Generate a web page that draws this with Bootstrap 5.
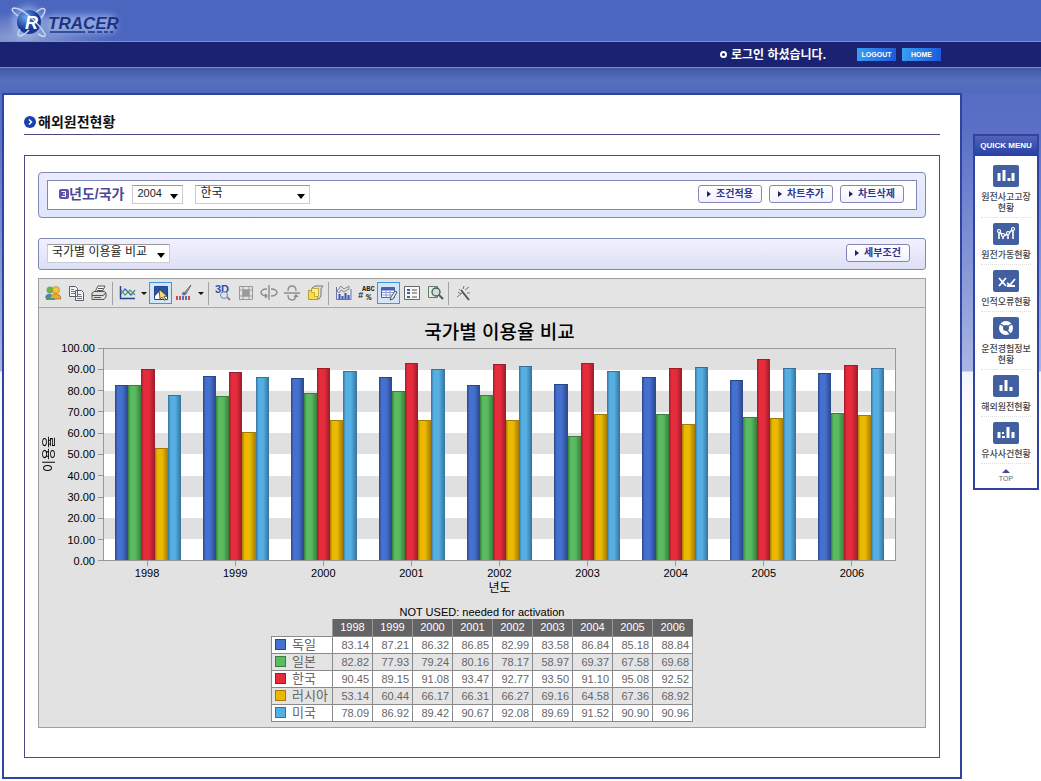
<!DOCTYPE html>
<html lang="ko">
<head>
<meta charset="utf-8">
<meta name="viewport" content="width=device-width, initial-scale=1">
<title>R-TRACER 해외원전현황</title>
<link href="https://cdn.jsdelivr.net/npm/bootstrap@5.3.0/dist/css/bootstrap.min.css" rel="stylesheet">
<style>
:root{--line:#4a4a80;--royal:#2f43a3}
body{font:12px/16px "Liberation Sans","Noto Sans CJK KR",sans-serif;color:#222;background:#fff linear-gradient(#4a64bd 0,#5a70c6 130px,#8394d6 260px,#a9b6e4 371px,#f3f5fd 372px,#fff 430px) no-repeat}
.brandbar{height:42px;border-bottom:1px solid #7f90d0;background:radial-gradient(ellipse 90px 26px at 20px 38px,#8fa0d4,transparent),#4b66be}
.brandbar svg{display:block}
.userbar{height:26px;background:#1a2272;border-bottom:1px solid #7c8ac4;padding-right:100px;color:#fff}
.greeting{margin-right:31px}
.dotmark{width:7px;height:7px;border:2px solid #fff;border-radius:50%}
.pill{width:39px;height:13px;border:0;background:linear-gradient(100deg,#3aa0f4,#1c58dc);color:#fff;font:bold 7px/13px "Liberation Sans",sans-serif;padding:0}
.pill+.pill{margin-left:6px}
.shade{height:25px;background:linear-gradient(#4058a0,#5670bf 50%,#5069bd)}
.stage{padding:0 2px 2px}
.panel{border:2px solid var(--royal);background:#fff;padding:18px 20px 19px}
.headline{font-size:14px;line-height:18px;color:#111;padding-bottom:3px;border-bottom:1px solid var(--line);gap:2px}
.frame{border:1px solid var(--line);margin-top:20px;padding:16px 13px 29px}
.outerbox{border:1px solid #8088b4;border-radius:4px;background:linear-gradient(#ecebff,#dfe5fb);padding:7px 8px}
.innerbox{border:1px solid #7c88b8;background:#fff;height:30px;padding:0 12px 2px 11px}
.slimbox{border:1px solid #8088b4;border-radius:3px;background:linear-gradient(#f2f1ff,#dcdff4);height:32px;margin-top:20px;padding:0 15px 2px 8px}
.cond{font-size:14px;color:#4a4a98}
.pick{height:19px;border:1px solid #c9ccd6;border-top-color:#999;border-radius:0;font-size:12px;line-height:15px;color:#222;padding:0 14px 2px 4px;appearance:none;background:#fff url("data:image/svg+xml,%3Csvg xmlns='http://www.w3.org/2000/svg' width='8' height='5'%3E%3Cpath d='M0 0h8L4 5z'/%3E%3C/svg%3E") no-repeat right 4px bottom 4px}
.pick-year{width:51px;font-size:11px}.pick-nation{width:115px;margin-left:12px}.pick-chart{width:123px}
.gobar{gap:7px}
.go{height:18px;width:64px;border:1px solid #8585b8;border-radius:3px;background:linear-gradient(#fff,#f2f2ff);color:#33338c;font-size:10px;line-height:16px;font-weight:bold;padding:0;white-space:nowrap}
.go::before{content:"";border:3px solid transparent;border-left:4px solid #222266;border-right:0;margin-right:5px;display:inline-block}
.viewer{border:1px solid #a0a0a0;background:#e2e2e2;margin-top:8px;padding-bottom:5px}
.tools{height:29px;border-bottom:1px solid #a8a8a8;background:#e4e4e4;padding-left:2px}
.tool{width:23px;height:22px;border:1px solid transparent;background:none;padding:0;display:flex;align-items:center;justify-content:center}
.tool.on{border-color:#3f95e0;background:#d3e6f8}
.tool svg{width:18px;height:18px}
.drop{width:11px;border:0;background:none;padding:0;display:flex;justify-content:center}
.drop::before{content:"";border:3px solid transparent;border-top:3px solid #111;border-bottom:0}
.bar-sep{width:1px;height:23px;background:#a2a2a2;margin:0 2px}
.charttitle{font-size:19px;line-height:20px;font-weight:500;color:#000;margin:15px 29px 5px 64px;text-align:center}
.plotrow{padding:0 29px 0 4px}
.ytitle{width:12px;font-size:13px;line-height:12px;writing-mode:vertical-rl;text-orientation:sideways;transform:rotate(180deg);text-align:center;color:#000}
.yaxis{width:48px;margin:-7px 0;font-size:11px;line-height:14px;color:#000}
.yaxis span::after{content:"";width:5px;height:1px;background:#999;margin-left:3px}
.plot{height:213px;border:1px solid #999;background:repeating-linear-gradient(#e0e0e0 0 10%,#fff 10% 20%)}
.cluster{padding:0 11px}
.cluster i{flex:1 1 0;background:linear-gradient(90deg,var(--d),var(--c) 20%,var(--c) 55%,var(--d));border-top:1px solid var(--d)}
.s0{--c:#4470d0;--d:#2b4687}.s1{--c:#5abb60;--d:#37803c}.s2{--c:#e62c3c;--d:#9c1c2a}.s3{--c:#ecb900;--d:#a17b05}.s4{--c:#55afe2;--d:#35729b}
.xaxis{margin:0 29px 0 64px;font-size:11px;line-height:15px;color:#000}
.xaxis span::before{content:"";display:block;width:1px;height:5px;margin:0 auto;background:#999}
.xtitle{font-size:12px;line-height:14px;color:#000;margin:0 29px 11px 64px}
.grid{border-collapse:collapse;font-size:11px;line-height:14px;color:#666}
.grid caption{caption-side:top;padding:0;color:#000;line-height:13px;text-align:center}
.grid td,.grid tbody th{border:1px solid #8a8a8a;background:#fff;font-weight:normal}
.grid td,.grid thead th{width:40px;height:17px;padding:0 3px;text-align:right}
.grid thead th{background:#646464;color:#fff;font-weight:normal;text-align:center;border-left:1px solid #999}
.grid thead td{border:0;background:none;width:61px}
.grid tbody th{padding:0 3px;font-size:13px;line-height:14px;white-space:nowrap}
.grid tbody tr:nth-child(even)>*{background:#e4e4e4}
.swatch{display:inline-block;width:11px;height:11px;background:var(--c);border:1px solid var(--d);margin-right:6px}
.quick{width:66px;margin:41px 0 0 11px;border:2px solid #3143a0;background:#fff}
.quick h2{font:bold 8px/20px "Liberation Sans",sans-serif;color:#fff;background:linear-gradient(#5264b8,#2740a4);margin:0 0 4px;text-align:center;white-space:nowrap}
.quick a{display:block;margin:0 6px;padding:5px 0 3px;border-bottom:1px dotted #ddd;text-decoration:none;color:#444;font-size:9px;line-height:11px;text-align:center;font-weight:500}
.quick a svg{display:block;margin:0 auto 5px;width:26px;height:22px}
.quick a span{display:block;margin:0 -4px}
.quick a.totop{border:0;padding:5px 0 5px;font-size:7px;line-height:8px;color:#666}
.quick a.totop svg{width:8px;height:4px;margin-bottom:2px}
</style>
</head>
<body>
<header>
  <div class="brandbar">
    <svg width="130" height="41" viewBox="0 0 130 41" role="img" aria-label="R TRACER">
      <defs><radialGradient id="ball" cx=".35" cy=".3"><stop offset="0" stop-color="#6ea4ea"/><stop offset="1" stop-color="#153a96"/></radialGradient>
      <filter id="halo" x="-20%" y="-50%" width="140%" height="200%"><feGaussianBlur stdDeviation="3"/></filter></defs>
      <rect x="46" y="15" width="70" height="18" rx="6" fill="#9db5e8" opacity=".75" filter="url(#halo)"/>
      <circle cx="28" cy="22" r="16" fill="#a9c0ee" opacity=".6" filter="url(#halo)"/>
      <circle cx="29" cy="22" r="12" fill="url(#ball)"/>
      <g fill="none" stroke="#c6d6f4" stroke-width="1.500"><path d="M18 16Q9 9 14 8q6 0 14 7 12 10 17 19 1 5-7 0"/><path d="M36 12q8-6 9-2 0 3-4 8M20 29q-4 7 0 7 4-1 9-6"/></g>
      <text x="25" y="29" font-family="Liberation Sans" font-size="18" font-style="italic" font-weight="bold" fill="#fff">R</text>
      <text x="48" y="29" font-family="Liberation Sans" font-size="17" font-style="italic" font-weight="bold" fill="#1d3482">TRACER</text>
      <path d="M50 32h35M88 32h7M97 32h5M104 32h4M110 32h3" stroke="#1d3482" stroke-width="1.500"/>
    </svg>
  </div>
  <nav class="userbar d-flex align-items-center justify-content-end">
    <span class="dotmark me-1"></span><strong class="greeting">로그인 하셨습니다.</strong>
    <button class="pill" type="button">LOGOUT</button>
    <button class="pill" type="button">HOME</button>
  </nav>
  <div class="shade"></div>
</header>
<div class="stage d-flex align-items-start">
  <main class="panel flex-grow-1">
    <h1 class="headline d-flex align-items-center fw-bold mb-0">
      <svg width="12" height="12" viewBox="0 0 12 12"><circle cx="6" cy="6" r="6" fill="#1c3fae"/><path d="M5 3.500l2.500 2.500L5 8.500" fill="none" stroke="#fff" stroke-width="1.500"/></svg>
      해외원전현황
    </h1>
    <section class="frame">
      <form class="outerbox">
        <div class="innerbox d-flex align-items-center">
          <svg class="flex-shrink-0" width="10" height="10" viewBox="0 0 10 10"><rect width="10" height="10" rx="2" fill="#5a54ac"/><path d="M2.500 2.500h4v5h-4M4 5h3" fill="none" stroke="#fff"/></svg>
          <label class="cond fw-bold me-2" for="year">년도/국가</label>
          <select class="pick pick-year" id="year"><option>2004</option></select>
          <select class="pick pick-nation" id="nation" aria-label="국가"><option>한국</option></select>
          <div class="gobar d-flex ms-auto">
            <button class="go" type="button">조건적용</button>
            <button class="go" type="button">차트추가</button>
            <button class="go" type="button">차트삭제</button>
          </div>
        </div>
      </form>
      <div class="slimbox d-flex align-items-center">
        <select class="pick pick-chart" aria-label="차트"><option>국가별 이용율 비교</option></select>
        <button class="go ms-auto" type="button">세부조건</button>
      </div>
      <div class="viewer">
        <div class="tools d-flex align-items-center" role="toolbar" aria-label="차트 도구">
          <button class="tool" type="button" aria-label="열기"><svg viewBox="0 0 18 18"><circle cx="6" cy="6" r="3.500" fill="#6cb04c"/><circle cx="12" cy="6" r="3.500" fill="#f3c53e" stroke="#b87c20" stroke-width=".7"/><path d="M1 14q1-5 6-4l2 4z" fill="#4a80cc"/><path d="M6 15q1-6 7-5 4 1 4 5z" fill="#eda73a" stroke="#a87028" stroke-width=".7"/><path d="M2 15h9" stroke="#4aa055" stroke-width="2"/></svg></button>
          <button class="tool" type="button" aria-label="복사"><svg viewBox="0 0 18 18" fill="#f5f5f5" stroke="#555c78"><path d="M2.500 2.500h6l2 2v8h-8zM8.500 6.500h6l2 2v8h-8z"/><path d="M4 5.500h3M4 7.500h4M4 9.500h4M10 10.500h4M10 12.500h5M10 14.500h5" stroke="#777"/></svg></button>
          <button class="tool" type="button" aria-label="인쇄"><svg viewBox="0 0 18 18" fill="#ddd" stroke="#555"><path d="M5 8l3-6h7l-3 6z" fill="#fff"/><path d="M2 9l2-1.500h10L16 9v4l-2 2.500H2z"/><path d="M2 11.500h11L16 9M4 13.500h7M8 4.500h5M7 6.500h5"/></svg></button>
          <span class="bar-sep"></span>
          <button class="tool" type="button" aria-label="차트 종류"><svg viewBox="0 0 18 18" fill="none"><path d="M2.500 2v12.500H17" stroke="#24428e" stroke-width="1.500"/><path d="M3 10l4-5 6 6 4-5" stroke="#2c62c0" stroke-width="1.200"/><path d="M3 6l4 5 5-5 5 5" stroke="#48a060" stroke-width="1.200"/></svg></button>
          <button class="drop" type="button" aria-label="종류 목록"></button>
          <button class="tool on" type="button" aria-label="선택"><svg viewBox="0 0 18 18"><path d="M2.500 2.500h13v13h-13z" fill="#fff" stroke="#24428e"/><path d="M3 3h12v10L8 7 3 12z" fill="#2d559f"/><path d="M7 5l8 7-3 .5 2 3-2 .7-2-3-2 2z" fill="#f7da7a" stroke="#222" stroke-width=".7"/></svg></button>
          <button class="tool" type="button" aria-label="색상"><svg viewBox="0 0 18 18"><path d="M16 1l-5 9-2 1 1-3z" fill="#bbb" stroke="#555" stroke-width=".8"/><path d="M10 8q-3-1-3 3 3 1 4-1" fill="#678"/><path d="M2 12v4M5 12v4" stroke="#d34b55" stroke-width="2"/><path d="M8 12v4M11 12v4" stroke="#4b78ca" stroke-width="2"/><path d="M14 12v4" stroke="#d34b55" stroke-width="2"/></svg></button>
          <button class="drop" type="button" aria-label="색상 목록"></button>
          <span class="bar-sep"></span>
          <button class="tool" type="button" aria-label="3D"><svg viewBox="0 0 18 18"><text x="1" y="9" font-family="Liberation Sans" font-size="11" font-weight="bold" fill="#344ea8">3D</text><circle cx="10" cy="11" r="3.500" fill="#d4e4f5" fill-opacity=".7" stroke="#748aac"/><path d="M13 13l3 3" stroke="#b97464" stroke-width="2"/></svg></button>
          <button class="tool" type="button" aria-label="회전"><svg viewBox="0 0 18 18" fill="none" stroke="#999"><path d="M2.500 2.500h13v13h-13zM2.500 6h13M2.500 12h13M6 2.500v13M12 2.500v13"/><path d="M6 6h6v6H6z" fill="#999"/></svg></button>
          <button class="tool" type="button" aria-label="세로축 회전"><svg viewBox="0 0 18 18" fill="none" stroke="#8d8d8d" stroke-width="1.400"><path d="M9 1v15M7 5Q1 5 1 9q1 3 6 3M11 5q6 0 6 4-1 3-6 3M5 10l2 2-2 2"/></svg></button>
          <button class="tool" type="button" aria-label="가로축 회전"><svg viewBox="0 0 18 18" fill="none" stroke="#8d8d8d" stroke-width="1.400"><path d="M1 9h16M5 7q0-5 4-5t4 5M5 11q0 5 4 5t4-5M11 13l2-2 2 2"/></svg></button>
          <button class="tool" type="button" aria-label="군집"><svg viewBox="0 0 18 18"><path d="M6 4l3-2h8l-2 3v7l-2 3H6z" fill="#ddd" stroke="#777"/><path d="M2.500 6.500h9v9h-9z" fill="#f5dc52" stroke="#b99a28"/><path d="M5.500 4.500h7v8h-4v-4h-3z" fill="#f9ec92" stroke="#b99a28" stroke-width=".8"/></svg></button>
          <span class="bar-sep"></span>
          <button class="tool" type="button" aria-label="축 설정"><svg viewBox="0 0 18 18"><path d="M2.500 3v12.500H17V5" fill="none" stroke="#6674ac"/><path d="M5.500 15v-5M8.500 15v-3M11.500 15V9M14.500 15v-4" stroke="#3a50b4" stroke-width="2"/><path d="M3 7l4-5 3 3 5-3v3l-5 3-3-2-2 3z" fill="#ddd" stroke="#777" stroke-width=".8"/></svg></button>
          <button class="tool" type="button" aria-label="레이블"><svg viewBox="0 0 18 18" font-family="Liberation Mono" font-weight="bold" fill="#222"><text x="5" y="7" font-size="7">ABC</text><text x="1" y="14" font-size="9">#</text><text x="9" y="16" font-size="9">%</text></svg></button>
          <button class="tool on" type="button" aria-label="데이터 표"><svg viewBox="0 0 18 18"><path d="M1.500 3.500h13v10h-13z" fill="#fff" stroke="#4a60b0"/><path d="M2 5h12" stroke="#4a60b0" stroke-width="3"/><path d="M2 8.500h12M2 11h12M6 6v8M10 6v8" stroke="#8a9ad0"/><path d="M17 8l-4 7-3 1 1-3 4-6z" fill="#eee" stroke="#555"/></svg></button>
          <button class="tool" type="button" aria-label="범례"><svg viewBox="0 0 18 18" fill="none"><path d="M1.500 2.500h15v13h-15z" fill="#f8f8f8" stroke="#666"/><path d="M4 5h3v2H4zM4 8h3v2H4zM4 12h3v2H4z" fill="#445ea8"/><path d="M9 6h5M9 9h5M9 13h5" stroke="#555"/></svg></button>
          <button class="tool" type="button" aria-label="확대"><svg viewBox="0 0 18 18"><path d="M2.500 2.500h9v11h-9z" fill="#e6f0e0" stroke="#5c7d66"/><circle cx="10" cy="8" r="4" fill="#cfe0d4" stroke="#456" stroke-width="1.300"/><path d="M13 11l4 4" stroke="#555" stroke-width="2"/></svg></button>
          <span class="bar-sep"></span>
          <button class="tool" type="button" aria-label="속성"><svg viewBox="0 0 18 18" fill="none" stroke="#555"><path d="M7 6l8 10" stroke-width="2"/><path d="M4 8l3 2M3 13l5-4M9 5l1-3M11 6l4-3M5 5l1 1M13 9h3" stroke="#777"/></svg></button>
        </div>
        <h2 class="charttitle">국가별 이용율 비교</h2>
        <div class="plotrow d-flex">
          <div class="ytitle">이용율</div>
          <div class="yaxis d-flex flex-column justify-content-between" id="yaxis"></div>
          <div class="plot d-flex flex-grow-1" id="plot"></div>
        </div>
        <div class="xaxis d-flex text-center" id="xaxis"></div>
        <div class="xtitle text-center">년도</div>
        <table class="grid mx-auto">
          <caption>NOT USED: needed for activation</caption>
          <thead><tr id="years"><td></td></tr></thead>
          <tbody id="rows"></tbody>
        </table>
      </div>
    </section>
  </main>
  <aside class="quick flex-shrink-0">
    <h2>QUICK MENU</h2>
    <a href="#"><svg viewBox="0 0 26 22"><rect width="26" height="22" rx="2" fill="#42609f"/><path d="M6 8v8M11 5v11M16 13v3M20 8v8" stroke="#fff" stroke-width="3"/></svg><span>원전사고고장<br>현황</span></a>
    <a href="#"><svg viewBox="0 0 26 22"><rect width="26" height="22" rx="2" fill="#42609f"/><path d="M6 16V8l4 5 5-2 5-5v10M10 16v-3M15 16v-5" fill="none" stroke="#fff" stroke-width="1.600"/><g fill="#42609f" stroke="#fff" stroke-width="1.200"><circle cx="6" cy="8" r="1.500"/><circle cx="10" cy="12" r="1.500"/><circle cx="15" cy="10" r="1.500"/><circle cx="20" cy="6" r="1.500"/></g></svg><span>원전가동현황</span></a>
    <a href="#"><svg viewBox="0 0 26 22"><rect width="26" height="22" rx="2" fill="#42609f"/><path d="M6 8l7 8M13 8l-7 8M14 13l3 2 5-6M14 16h8" fill="none" stroke="#fff" stroke-width="1.800"/></svg><span>인적오류현황</span></a>
    <a href="#"><svg viewBox="0 0 26 22"><rect width="26" height="22" rx="2" fill="#42609f"/><circle cx="13" cy="11" r="5" fill="none" stroke="#fff" stroke-width="4"/><path d="M14 10l6-4M12 10l-6-4M13 12l5 6" stroke="#42609f" stroke-width="1.500"/></svg><span>운전경험정보<br>현황</span></a>
    <a href="#"><svg viewBox="0 0 26 22"><rect width="26" height="22" rx="2" fill="#42609f"/><path d="M8 10v6M13 5v11M18 12v4" stroke="#fff" stroke-width="3"/></svg><span>해외원전현황</span></a>
    <a href="#"><svg viewBox="0 0 26 22"><rect width="26" height="22" rx="2" fill="#42609f"/><path d="M6 10v6M15 5v11M20 10v6" stroke="#fff" stroke-width="3"/><path d="M9 15h3M9 11h2" stroke="#fff" stroke-width="2"/></svg><span>유사사건현황</span></a>
    <a href="#" class="totop"><svg viewBox="0 0 8 4"><path d="M4 0l4 4H0z" fill="#4a4a90"/></svg>TOP</a>
  </aside>
</div>
<script src="https://cdn.jsdelivr.net/npm/bootstrap@5.3.0/dist/js/bootstrap.bundle.min.js"></script>
<script>
const years = [1998,1999,2000,2001,2002,2003,2004,2005,2006];
const series = [
  ['독일',[83.14,87.21,86.32,86.85,82.99,83.58,86.84,85.18,88.84]],
  ['일본',[82.82,77.93,79.24,80.16,78.17,58.97,69.37,67.58,69.68]],
  ['한국',[90.45,89.15,91.08,93.47,92.77,93.50,91.10,95.08,92.52]],
  ['러시아',[53.14,60.44,66.17,66.31,66.27,69.16,64.58,67.36,68.92]],
  ['미국',[78.09,86.92,89.42,90.67,92.08,89.69,91.52,90.90,90.96]]
];
const put = (id, html) => document.getElementById(id).insertAdjacentHTML('beforeend', html);
for (let v = 100; v >= 0; v -= 10)
  put('yaxis', `<span class="d-flex align-items-center justify-content-end">${v.toFixed(2)}</span>`);
years.forEach((y, k) => {
  put('plot', `<div class="cluster d-flex align-items-end flex-fill">${series.map((s, n) => `<i class="s${n}" style="height:${s[1][k]}%"></i>`).join('')}</div>`);
  put('xaxis', `<span class="flex-fill">${y}</span>`);
  put('years', `<th scope="col">${y}</th>`);
});
series.forEach(([name, values], n) => put('rows',
  `<tr><th scope="row"><span class="d-flex align-items-center"><span class="swatch s${n}"></span>${name}</span></th>${values.map(v => `<td>${v.toFixed(2)}</td>`).join('')}</tr>`));
</script>
</body>
</html>
